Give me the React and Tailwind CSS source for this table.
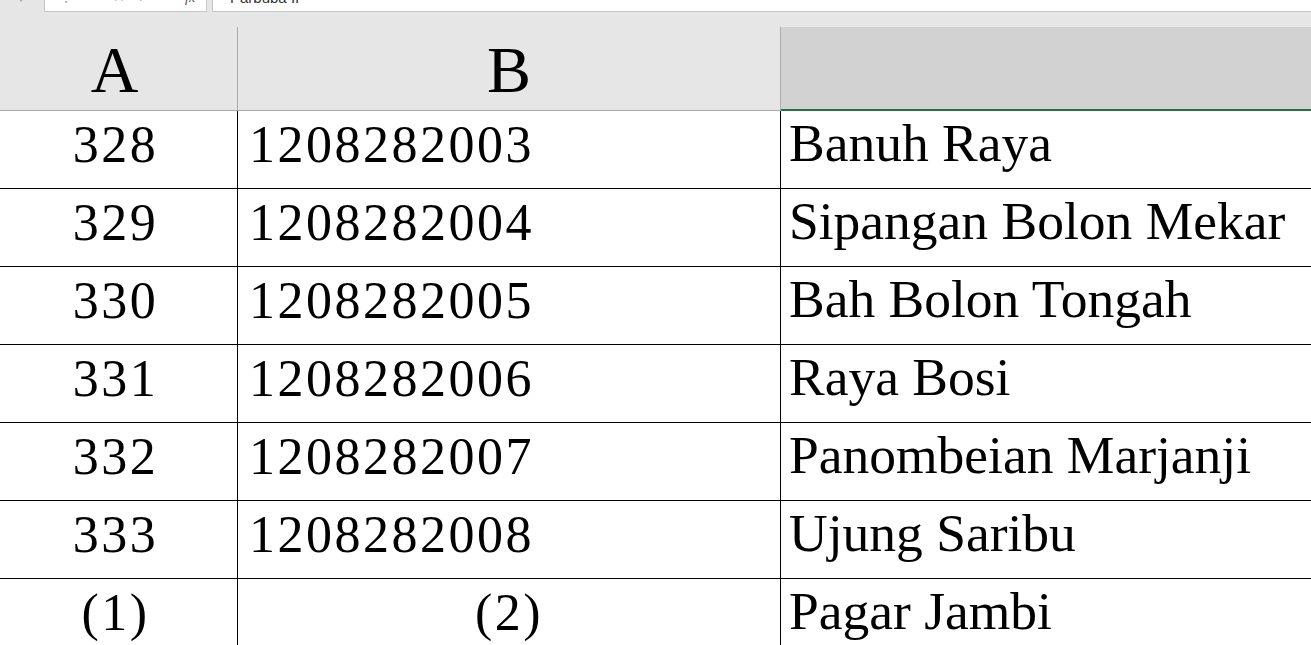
import React from 'react';

const rows = [
    { no: '328', code: '1208282003', name: 'Banuh Raya' },
    { no: '329', code: '1208282004', name: 'Sipangan Bolon Mekar' },
    { no: '330', code: '1208282005', name: 'Bah Bolon Tongah' },
    { no: '331', code: '1208282006', name: 'Raya Bosi' },
    { no: '332', code: '1208282007', name: 'Panombeian Marjanji' },
    { no: '333', code: '1208282008', name: 'Ujung Saribu' },
];

// digits in the sheet are wider than Liberation's, so spread them a bit
const Row = ({ a, b, c, centerB }) => (
    <div className="grid grid-cols-[238px_543px_1fr] h-[78px] border-b border-black shrink-0">
        <div className="border-r border-black text-center pr-[6px] pt-[8px] text-[52px] tracking-[2.5px]">{a}</div>
        <div className={`border-r border-black pt-[8px] text-[52px] tracking-[2.5px] ${centerB ? 'text-center' : 'pl-[11px]'}`}>{b}</div>
        <div className="pl-[8px] pt-[6px] text-[53.5px] whitespace-nowrap">{c}</div>
    </div>
);

const App = () => {
    return (
        <div className="w-[1311px] h-[645px] overflow-hidden bg-white flex flex-col">
            {/* formula bar, mostly scrolled out of view */}
            <div className="flex h-[12px] bg-[#e6e6e6] shrink-0 font-['Liberation_Sans']">
                <div className="w-[44px] text-[#9a9a9a] text-[12px] leading-none -mt-[8px] pl-[18px]">▾</div>
                <div className="w-[163px] bg-white border-r border-b border-l border-[#c6c6c6] flex text-[#a0a0a0] text-[14px] leading-none -mt-px overflow-hidden">
                    <span className="ml-[14px] -mt-[9px]">⋮</span>
                    <span className="ml-[40px] -mt-[9px]">✕</span>
                    <span className="ml-[12px] -mt-[9px]">✓</span>
                    <span className="ml-[36px] -mt-[8px] italic font-['Liberation_Serif'] text-[#555]">fx</span>
                </div>
                <div className="w-[5px]" />
                <div className="flex-1 bg-white border-l border-b border-[#c6c6c6] overflow-hidden">
                    <div className="pl-[17px] -mt-[10px] text-[15px] leading-none text-[#333]">Parbuba II</div>
                </div>
            </div>
            <div className="h-[15px] bg-[#e6e6e6] shrink-0" />

            <div className="font-['Liberation_Serif'] text-black">
                {/* column headers */}
                <div className="grid grid-cols-[238px_543px_1fr] h-[84px] text-[66px] leading-none">
                    <div className="bg-[#e6e6e6] border-r border-b border-[#ababab] text-center pr-[8px] pt-[10px]">A</div>
                    <div className="bg-[#e6e6e6] border-r border-b border-[#ababab] text-center pt-[10px]">B</div>
                    <div className="bg-[#d2d2d2] border-b-2 border-[#217346]" />
                </div>

                <div className="leading-none">
                    {rows.map((r) => (
                        <Row key={r.no} a={r.no} b={r.code} c={r.name} />
                    ))}
                    <Row a="(1)" b="(2)" c="Pagar Jambi" centerB />
                </div>
            </div>
        </div>
    );
};

export default App;
